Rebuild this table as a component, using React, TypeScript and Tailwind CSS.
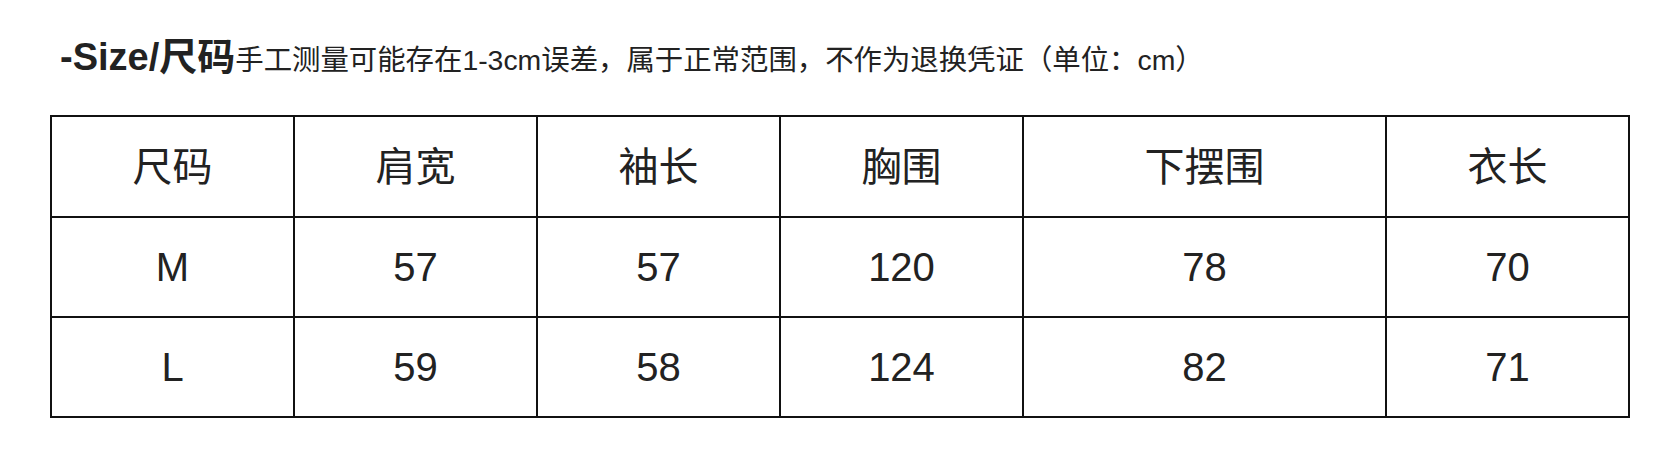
const headers = ["尺码", "肩宽", "袖长", "胸围", "下摆围", "衣长"]

const rows = [
  ["M", "57", "57", "120", "78", "70"],
  ["L", "59", "58", "124", "82", "71"],
]

const colWidths = ["w-[243px]", "w-[243px]", "w-[243px]", "w-[243px]", "w-[363px]", "w-[243px]"]

export default function App() {
  return (
    <div
      className="w-[1676px] h-[472px] bg-white text-[#222] pl-[50px] pt-[38px]"
      style={{ fontFamily: '"Liberation Sans", "Noto Sans CJK SC", sans-serif' }}
    >
      {/* Title */}
      <div className="flex items-baseline pl-[10px] leading-none">
        <span className="text-[38px] font-bold">-Size/尺码</span>
        <span className="text-[28.4px]">手工测量可能存在1-3cm误差，属于正常范围，不作为退换凭证（单位：cm）</span>
      </div>

      {/* Size table */}
      <table className="mt-[39px] w-[1578px] table-fixed border-collapse">
        <colgroup>
          {colWidths.map((w, i) => (
            <col key={i} className={w} />
          ))}
        </colgroup>
        <thead>
          <tr>
            {headers.map((h) => (
              <th
                key={h}
                className="h-[101px] border-2 border-[#111] text-center text-[40px] font-normal leading-none"
              >
                {h}
              </th>
            ))}
          </tr>
        </thead>
        <tbody>
          {rows.map((row) => (
            <tr key={row[0]}>
              {row.map((cell, i) => (
                <td
                  key={i}
                  className="h-[100px] border-2 border-[#111] text-center text-[40px] leading-none"
                >
                  {cell}
                </td>
              ))}
            </tr>
          ))}
        </tbody>
      </table>
    </div>
  )
}
